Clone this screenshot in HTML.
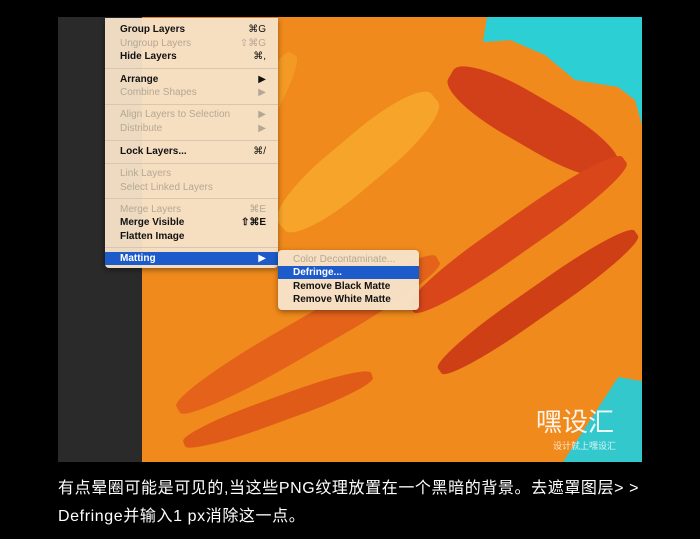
<!DOCTYPE html>
<html><head><meta charset="utf-8"><style>
*{margin:0;padding:0;box-sizing:border-box}
body{width:700px;height:539px;background:#000;position:relative;overflow:hidden;font-family:"Liberation Sans",sans-serif}
.img{position:absolute;left:58px;top:17px;width:584px;height:445px;overflow:hidden;background:#f08a1c}
.dark{position:absolute;left:0;top:0;width:84px;height:445px;background:#2a2a2a}
.s{position:absolute;border-radius:40%}
.menu{position:absolute;left:105px;top:18px;width:173px;height:250px;background:rgba(246,226,200,.96);border-radius:0 0 4px 4px;box-shadow:0 2px 6px rgba(0,0,0,.4);font-size:10px;color:#111}
.it{position:absolute;left:15px;right:8px;height:13px;line-height:13px}
.it b{font-weight:bold}
.it .k{position:absolute;right:4px;top:0}
.g{color:#b5a893}
.sep{position:absolute;left:0;right:0;height:1px;background:#d8c7b0}
.hl{background:#1c5bc9;color:#fff;left:0;right:0;padding-left:15px}
.sub{position:absolute;left:278px;top:250px;width:141px;height:60px;background:rgba(246,226,200,.97);border-radius:4px;box-shadow:0 2px 6px rgba(0,0,0,.4);font-size:10px;color:#111}
.cap{position:absolute;left:58px;color:#fff;font-family:"Liberation Sans","Noto Sans CJK SC",sans-serif;font-size:16px;letter-spacing:0.6px;white-space:nowrap}
</style></head><body>
<div class="img">
 <div style="position:absolute;left:420px;top:0;width:164px;height:125px;background:#2ccfd4;clip-path:polygon(9px 0,164px 0,164px 108px,157px 83px,140px 70px,97px 63px,67px 38px,32px 23px,5px 25px)"></div>
 <div class="s" style="left:380px;top:80px;width:190px;height:50px;background:#d2401a;transform:rotate(30deg)"></div>
 <div class="s" style="left:330px;top:200px;width:260px;height:35px;background:#d8461a;transform:rotate(-35deg)"></div>
 <div class="s" style="left:360px;top:270px;width:240px;height:30px;background:#cf3f16;transform:rotate(-35deg)"></div>
 <div class="s" style="left:100px;top:300px;width:300px;height:35px;background:#e4621a;transform:rotate(-30deg)"></div>
 <div class="s" style="left:200px;top:120px;width:200px;height:50px;background:#f7a42a;transform:rotate(-40deg)"></div>
 <div class="s" style="left:120px;top:380px;width:200px;height:25px;background:#e05a18;transform:rotate(-20deg)"></div>
 <div class="s" style="left:100px;top:100px;width:180px;height:30px;background:#f39a25;transform:rotate(-60deg)"></div>
 <div style="position:absolute;left:505px;top:360px;width:79px;height:85px;background:#33c8cc;clip-path:polygon(70% 0,100% 5%,100% 100%,0 100%)"></div>
 <div style="position:absolute;left:478px;top:385px;color:#fff;font-family:'Noto Sans CJK SC',sans-serif;font-size:26px;opacity:.9">嘿设汇</div>
 <div style="position:absolute;left:495px;top:422px;color:#fff;font-family:'Noto Sans CJK SC',sans-serif;font-size:9px;opacity:.8">设计就上嘿设汇</div>
 <div class="dark"></div>
</div>
<div class="menu">
 <div class="it" style="top:5px"><b>Group Layers</b><span class="k">⌘G</span></div>
 <div class="it g" style="top:19px">Ungroup Layers<span class="k">⇧⌘G</span></div>
 <div class="it" style="top:32px"><b>Hide Layers</b><span class="k">⌘,</span></div>
 <div class="sep" style="top:50px"></div>
 <div class="it" style="top:55px"><b>Arrange</b><span class="k">▶</span></div>
 <div class="it g" style="top:68px">Combine Shapes<span class="k">▶</span></div>
 <div class="sep" style="top:86px"></div>
 <div class="it g" style="top:90px">Align Layers to Selection<span class="k">▶</span></div>
 <div class="it g" style="top:104px">Distribute<span class="k">▶</span></div>
 <div class="sep" style="top:122px"></div>
 <div class="it" style="top:127px"><b>Lock Layers...</b><span class="k">⌘/</span></div>
 <div class="sep" style="top:145px"></div>
 <div class="it g" style="top:149px">Link Layers</div>
 <div class="it g" style="top:163px">Select Linked Layers</div>
 <div class="sep" style="top:180px"></div>
 <div class="it g" style="top:185px">Merge Layers<span class="k">⌘E</span></div>
 <div class="it" style="top:198px"><b>Merge Visible</b><span class="k"><b>⇧⌘E</b></span></div>
 <div class="it" style="top:212px"><b>Flatten Image</b></div>
 <div class="sep" style="top:229px"></div>
 <div class="it hl" style="top:234px"><b>Matting</b><span class="k" style="right:12px">▶</span></div>
</div>
<div class="sub">
 <div class="it g" style="top:3px;left:15px">Color Decontaminate...</div>
 <div class="it hl" style="top:16px;padding-left:15px"><b>Defringe...</b></div>
 <div class="it" style="top:30px;left:15px"><b>Remove Black Matte</b></div>
 <div class="it" style="top:43px;left:15px"><b>Remove White Matte</b></div>
</div>
<div class="cap" style="top:474px">有点晕圈可能是可见的,当这些PNG纹理放置在一个黑暗的背景。去遮罩图层&gt; &gt;</div>
<div class="cap" style="top:502px">Defringe并输入1 px消除这一点。</div>
</body></html>
